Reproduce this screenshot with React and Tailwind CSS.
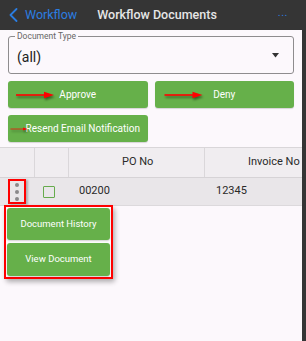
import React from "react";

function Arrow({ className }) {
  return (
    <svg className={className} viewBox="0 0 40 10" fill="none" style={{ filter: "drop-shadow(1px 2px 1px rgba(0,0,0,0.45))" }}>
      <line x1="1" y1="5" x2="31" y2="5" stroke="#ff0000" strokeWidth="1.6" />
      <path d="M29 1.8 L39 5 L29 8.2 Z" fill="#ff0000" />
    </svg>
  );
}

function GreenButton({ label, arrow, arrowClass, className = "" }) {
  return (
    <button className={`relative h-[27px] rounded-[3px] bg-[#66b04a] text-white text-[10px] flex items-center justify-center shadow-[0_1px_1px_rgba(0,0,0,0.15)] ${className}`}>
      {arrow && <Arrow className={`absolute top-1/2 -translate-y-1/2 ${arrowClass}`} />}
      <span>{label}</span>
    </button>
  );
}

export default function App() {
  return (
    <div className="w-[306px] h-[341px] bg-[#353535] flex flex-col overflow-hidden" style={{ fontFamily: "Roboto, 'Liberation Sans', sans-serif" }}>
      <header className="h-[30px] shrink-0 flex items-center pl-[9px] pr-[18px] text-[12px]">
        <svg className="w-[9px] h-[14px] mr-[7px]" viewBox="0 0 9 14" fill="none">
          <path d="M7.5 1 L1.5 7 L7.5 13" stroke="#2b7de0" strokeWidth="1.8" strokeLinecap="round" strokeLinejoin="round" />
        </svg>
        <span className="text-[#2b7de0] text-[12.5px]">Workflow</span>
        <span className="ml-[20px] text-[#e6e6e6] font-medium text-[12.5px]">Workflow Documents</span>
        <span className="ml-auto text-[#2b7de0] text-[11px] tracking-[0.5px] mb-[4px]">...</span>
      </header>

      <main className="relative w-[302px] flex-1 bg-[#fcf8fc]">
        <div className="px-[8px] pt-[6px]">
          <div className="relative h-[38px] border border-[#8e8c8e] rounded-[3px] flex items-center pl-[8px] pr-[14px]">
            <span className="absolute -top-[6px] left-[6px] px-[2px] bg-[#fcf8fc] text-[8.5px] leading-[10px] text-[#666]">Document Type</span>
            <span className="text-[14px] text-[#222] mt-[4px]">(all)</span>
            <svg className="ml-auto w-[7px] h-[5px] mt-[1px]" viewBox="0 0 7 5">
              <path d="M0 0 H7 L3.5 4.5 Z" fill="#333" />
            </svg>
          </div>

          <div className="grid grid-cols-2 gap-x-[7px] gap-y-[7px] mt-[7px]">
            <GreenButton label="Approve" arrow arrowClass="left-[7px] w-[40px] h-[10px]" />
            <GreenButton label="Deny" arrow arrowClass="left-[8px] w-[41px] h-[10px]" />
            <GreenButton label="Resend Email Notification" arrow arrowClass="left-[2px] w-[18px] h-[10px]" className="pl-[10px]" />
          </div>
        </div>

        <div className="mt-[5px] border-t border-[#d9d6d9] text-[11px] text-[#2a2a2a]">
          <div className="flex h-[30px] bg-[#f0edf0] border-b border-[#d6d3d6]">
            <div className="w-[35px] shrink-0 border-r border-[#dad7da]" />
            <div className="w-[34px] shrink-0 border-r border-[#dad7da]" />
            <div className="w-[136px] shrink-0 border-r border-[#dad7da] flex items-center pl-[53px]">PO No</div>
            <div className="flex-1 min-w-0 flex items-center pl-[43px] whitespace-nowrap overflow-hidden">Invoice No</div>
          </div>
          <div className="flex h-[28px] bg-[#e9e6e9] border-b border-[#dcd9dc]">
            <div className="w-[35px] shrink-0 flex items-center pl-[8px]">
              <div className="w-[18px] h-[25px] border-2 border-[#ff0000] flex flex-col items-center justify-center gap-[3px] shadow-[2px_1px_2px_rgba(0,0,0,0.25)]">
                <span className="w-[4px] h-[4px] rounded-full bg-[#8a888a]" />
                <span className="w-[4px] h-[4px] rounded-full bg-[#8a888a]" />
                <span className="w-[4px] h-[4px] rounded-full bg-[#8a888a]" />
              </div>
            </div>
            <div className="w-[34px] shrink-0 flex items-center pl-[8px]">
              <div className="w-[12px] h-[12px] border-[1.5px] border-[#66ab4c] rounded-[1px]" />
            </div>
            <div className="w-[136px] shrink-0 flex items-center pl-[10px]">00200</div>
            <div className="flex-1 flex items-center pl-[11px]">12345</div>
          </div>
        </div>

        <div className="absolute left-[4px] top-[175px] w-[109px] bg-white rounded-[3px] shadow-[2px_3px_5px_rgba(0,0,0,0.3)]">
          <div className="border-2 border-[#ff0000] p-[1px] flex flex-col gap-[3px]">
            <button className="h-[32px] rounded-[3px] bg-[#66b04a] text-white text-[9.5px] shadow-[0_1px_2px_rgba(0,0,0,0.2)]">Document History</button>
            <button className="h-[33px] rounded-[3px] bg-[#66b04a] text-white text-[9.5px] shadow-[0_1px_2px_rgba(0,0,0,0.2)]">View Document</button>
          </div>
        </div>
      </main>
    </div>
  );
}
